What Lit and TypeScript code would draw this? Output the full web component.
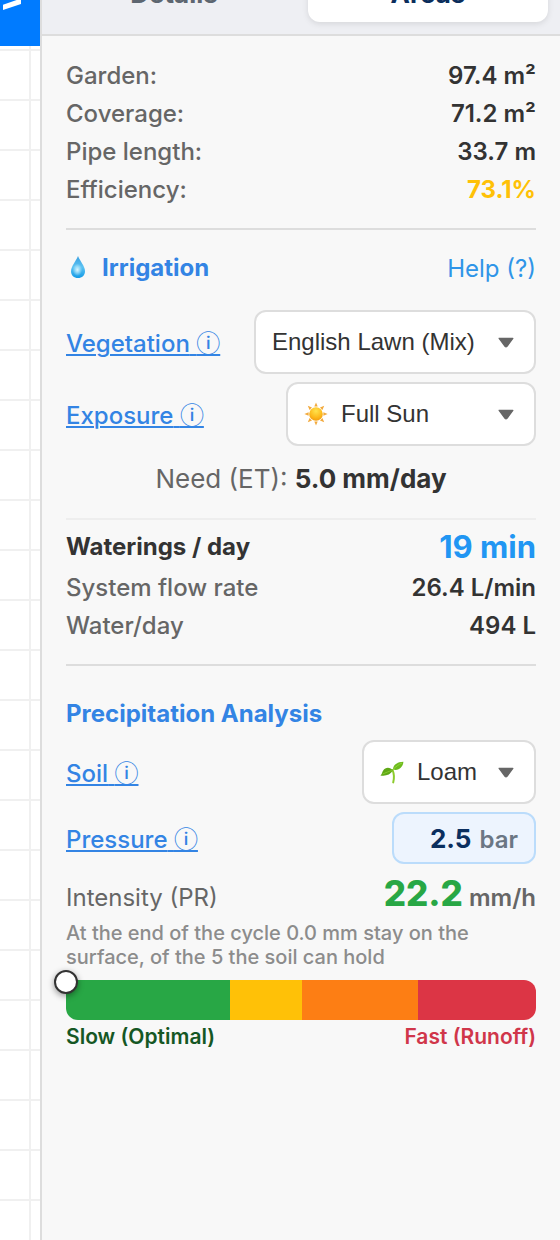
import { LitElement, html, css, svg, nothing, TemplateResult } from "lit";
import { customElement, property } from "lit/decorators.js";

const sun = html`<svg width="24" height="24" viewBox="0 0 24 24" aria-hidden="true">
  <defs>
    <radialGradient id="sun" cx="50%" cy="28%" r="75%">
      <stop offset="0" stop-color="#ffe34d" />
      <stop offset="0.6" stop-color="#fdbb1e" />
      <stop offset="1" stop-color="#f39a0c" />
    </radialGradient>
  </defs>
  ${[0, 45, 90, 135, 180, 225, 270, 315].map(
    (a) => svg`<path d="M12 0.4 L13.7 4.6 H10.3 Z" fill="#f2a93c" transform="rotate(${a} 12 12)" />`
  )}
  <circle cx="12" cy="12" r="6.8" fill="url(#sun)" />
</svg>`;

const seedling = html`<svg width="24" height="24" viewBox="0 0 24 24" aria-hidden="true">
  <path d="M13.2 22.4 C14.4 18 14 13.6 12.6 10" fill="none" stroke="#8ccb2c" stroke-width="2" stroke-linecap="round" />
  <path d="M12.8 10.6 C10.6 7 5.4 7 3.2 10.4 C2 12.2 2 14 0.4 15.4 C4.8 16.6 10.4 15 12.8 10.6 Z" fill="#5fa816" />
  <path d="M2.6 14 C5.6 12.8 8.6 11.4 12.4 10.4" fill="none" stroke="#86c82d" stroke-width="1" />
  <path d="M13 9.4 C13 5 17.4 1.8 23.4 1.8 C23.2 6.8 18.4 11.4 13 9.4 Z" fill="#6dbb1d" />
  <path d="M13.2 9.2 C16 6.6 18.8 4.4 22 3" fill="none" stroke="#93d43b" stroke-width="1" />
</svg>`;

const drop = html`<svg width="24" height="24" viewBox="0 0 24 24" aria-hidden="true">
  <defs>
    <linearGradient id="drop" x1="0" y1="0" x2="0" y2="1">
      <stop offset="0" stop-color="#3a9fe0" />
      <stop offset="0.5" stop-color="#5cc3f3" />
      <stop offset="1" stop-color="#159be6" />
    </linearGradient>
    <radialGradient id="shine" cx="50%" cy="50%" r="50%">
      <stop offset="0" stop-color="#d9f6ff" />
      <stop offset="1" stop-color="#d9f6ff" stop-opacity="0" />
    </radialGradient>
  </defs>
  <path d="M12 0 C14 5 19 10.4 19 15.2 C19 19.4 16 22 12 22 C8 22 5 19.4 5 15.2 C5 10.4 10 5 12 0 Z" fill="url(#drop)" />
  <ellipse cx="11.4" cy="13.8" rx="4.8" ry="6.2" fill="url(#shine)" />
</svg>`;

@customElement("stat-row")
class StatRow extends LitElement {
  @property() label = "";
  @property() value = "";
  @property() tone = "";

  static styles = css`
    :host {
      display: flex;
      justify-content: space-between;
      align-items: center;
      line-height: 38px;
    }
    .label {
      color: #666;
      font-weight: 500;
    }
    .value {
      color: #333;
      font-weight: 600;
    }
    .warn {
      color: #ffc107;
      font-weight: 700;
    }
  `;

  render() {
    return html`<span class="label">${this.label}</span>
      <span class="value ${this.tone}">${this.value}</span>`;
  }
}

@customElement("app-root")
class AppRoot extends LitElement {
  static styles = css`
    :host {
      display: grid;
      grid-template-columns: 40px 1fr;
      min-height: 100vh;
      box-sizing: border-box;
      font-family: Inter, "Liberation Sans", sans-serif;
      font-size: 24px;
      color: #333;
    }
    .canvas {
      background-color: #fff;
      background-image: linear-gradient(#f0f0f0 2px, transparent 2px),
        linear-gradient(90deg, #f0f0f0 2px, transparent 2px);
      background-size: 50px 50px;
      background-position: 29px 49px;
    }
    .toggle {
      display: block;
      width: 100%;
      height: 46px;
      padding: 0;
      border: 0;
      background: #007bff;
    }
    .toggle svg {
      display: block;
      height: 46px;
    }
    .panel {
      border-left: 2px solid #ddd;
      background: #f8f8f8;
    }
    .tabs {
      display: grid;
      grid-template-columns: 1fr 1fr;
      gap: 14px;
      height: 34px;
      overflow: hidden;
      align-content: end;
      padding: 0 12px;
      background: #eeeff3;
      border-bottom: 2px solid #ddd;
    }
    .tab {
      margin: 0 0 12px;
      padding: 12px 0;
      border: 0;
      border-radius: 12px;
      background: transparent;
      font-family: inherit;
      font-size: 26px;
      font-weight: 700;
      line-height: 32px;
      color: #5d6670;
    }
    .tab.active {
      background: #fff;
      color: #0b2e5c;
      box-shadow: 0 2px 6px rgba(0, 0, 0, 0.1);
    }
    .content {
      padding: 21px 24px;
    }
    .block {
      padding-bottom: 19px;
      border-bottom: 2px solid #ddd;
    }
    h2 {
      display: flex;
      align-items: center;
      gap: 12px;
      margin: 0;
      font-size: 24px;
      font-weight: 700;
      line-height: 32px;
      color: #3384e4;
    }
    .head {
      display: flex;
      justify-content: space-between;
      align-items: center;
      padding: 22px 0 26px;
    }
    .help {
      color: #2f95e8;
      text-decoration: none;
    }
    .field {
      display: flex;
      justify-content: space-between;
      align-items: center;
      margin-bottom: 8px;
    }
    .field label {
      padding-top: 4px;
    }
    .field a {
      color: #3384e4;
      font-weight: 500;
      line-height: 32px;
      text-decoration: underline;
      text-decoration-thickness: 2px;
      text-underline-offset: 2px;
    }
    .info {
      font-family: "Noto Sans CJK JP", sans-serif;
      font-weight: 500;
      line-height: 24px;
    }
    .picker {
      display: grid;
      align-items: center;
    }
    .picker > * {
      grid-area: 1 / 1;
    }
    .picker svg {
      pointer-events: none;
      z-index: 1;
    }
    .picker .icon {
      display: flex;
      margin-left: 18px;
      pointer-events: none;
    }
    .picker .arrow {
      justify-self: end;
      margin-right: 22px;
    }
    select {
      appearance: none;
      width: 100%;
      height: 64px;
      padding: 0 56px 2px 16px;
      border: 2px solid #ddd;
      border-radius: 12px;
      background: #fff;
      font-family: "Liberation Sans", Arial, sans-serif;
      font-size: 24px;
      color: #333;
    }
    .with-icon select {
      padding-left: 53px;
    }
    .wide {
      width: 282px;
    }
    .medium {
      width: 250px;
    }
    .narrow {
      width: 174px;
    }
    .need {
      margin: 0;
      padding: 8px 0 22px;
      text-align: center;
      font-size: 26px;
      line-height: 34px;
      color: #666;
      border-bottom: 2px solid #eee;
    }
    .need b {
      color: #333;
      font-weight: 700;
    }
    .main-row {
      display: flex;
      justify-content: space-between;
      align-items: center;
      padding: 7px 0 2px;
      line-height: 40px;
      font-weight: 700;
    }
    .time {
      font-size: 31px;
      color: #2196f3;
    }
    .analysis {
      padding-top: 32px;
    }
    .analysis h2 {
      margin-bottom: 10px;
    }
    .pressure {
      display: flex;
      align-items: baseline;
      gap: 8px;
      box-sizing: border-box;
      width: 144px;
      height: 52px;
      padding: 0 16px;
      border: 2px solid #bbdcfb;
      border-radius: 12px;
      background: #edf4fe;
      color: #6b7684;
      font-weight: 600;
      line-height: 48px;
    }
    .pressure input {
      flex: 1;
      min-width: 0;
      height: 48px;
      padding: 0;
      border: 0;
      background: transparent;
      text-align: right;
      font-family: inherit;
      font-size: 26px;
      font-weight: 700;
      color: #0b2f5f;
    }
    .intensity {
      display: flex;
      justify-content: space-between;
      align-items: baseline;
      line-height: 42px;
      color: #666;
    }
    .rate {
      font-weight: 600;
    }
    .rate strong {
      font-size: 35px;
      font-weight: 800;
      color: #28a745;
    }
    .note {
      margin: 2px 0 11px;
      font-size: 20px;
      font-weight: 500;
      line-height: 24px;
      color: #8c8c8c;
    }
    .meter {
      position: relative;
    }
    .scale {
      display: grid;
      grid-template-columns: 164fr 72fr 116fr 118fr;
      height: 40px;
      border-radius: 12px;
      overflow: hidden;
    }
    .slow {
      background: #28a745;
    }
    .moderate {
      background: #ffc107;
    }
    .quick {
      background: #fd7e14;
    }
    .fast {
      background: #dc3545;
    }
    .knob {
      position: absolute;
      top: -10px;
      width: 24px;
      height: 24px;
      box-sizing: border-box;
      border: 2px solid #333;
      border-radius: 50%;
      background: #fff;
      transform: translateX(-50%);
      box-shadow: 0 2px 6px rgba(0, 0, 0, 0.4);
    }
    .ends {
      display: flex;
      justify-content: space-between;
      padding-top: 5px;
      font-size: 21px;
      font-weight: 600;
      line-height: 24px;
      color: #155724;
    }
    .ends .runoff {
      color: #d0364a;
    }
  `;

  private picker(id: string, label: string, value: string, size: string, icon?: TemplateResult) {
    return html`<div class="field">
      ${this.info(id, label)}
      <div class="picker ${size} ${icon ? "with-icon" : ""}">
        <select id=${id}>
          <option>${value}</option>
        </select>
        ${icon ? html`<span class="icon">${icon}</span>` : nothing}
        <svg class="arrow" width="16" height="12" viewBox="0 0 16 12" aria-hidden="true">
          <path d="M1.2 2.4 H14.8 L8.9 10.4 Q8 11.4 7.1 10.4 Z" fill="#666" stroke="#666" stroke-width="1.4" stroke-linejoin="round" />
        </svg>
      </div>
    </div>`;
  }

  private info(id: string, label: string) {
    return html`<label for=${id}><a href="#${id}">${label} <span class="info">ⓘ</span></a></label>`;
  }

  render() {
    return html`
      <div class="canvas">
        <button class="toggle" aria-label="Toggle panel">
          <svg width="40" height="46" viewBox="0 0 40 46" aria-hidden="true">
            <path d="M3 4.8 L16.6 0 H21 V4 L3 10 Z" fill="#fff" />
          </svg>
        </button>
      </div>
      <aside class="panel">
        <nav class="tabs">
          <button class="tab">Details</button>
          <button class="tab active">Areas</button>
        </nav>
        <div class="content">
          <section class="block">
            <stat-row label="Garden:" value="97.4 m²"></stat-row>
            <stat-row label="Coverage:" value="71.2 m²"></stat-row>
            <stat-row label="Pipe length:" value="33.7 m"></stat-row>
            <stat-row label="Efficiency:" value="73.1%" tone="warn"></stat-row>
          </section>
          <section class="block">
            <div class="head">
              <h2>${drop}Irrigation</h2>
              <a class="help" href="#help">Help (?)</a>
            </div>
            ${this.picker("vegetation", "Vegetation", "English Lawn (Mix)", "wide")}
            ${this.picker("exposure", "Exposure", "Full Sun", "medium", sun)}
            <p class="need">Need (ET): <b>5.0 mm/day</b></p>
            <div class="main-row">
              <span>Waterings / day</span>
              <span class="time">19 min</span>
            </div>
            <stat-row label="System flow rate" value="26.4 L/min"></stat-row>
            <stat-row label="Water/day" value="494 L"></stat-row>
          </section>
          <section class="analysis">
            <h2>Precipitation Analysis</h2>
            ${this.picker("soil", "Soil", "Loam", "narrow", seedling)}
            <div class="field">
              ${this.info("pressure", "Pressure")}
              <div class="pressure">
                <input id="pressure" type="text" inputmode="decimal" value="2.5" />
                <span>bar</span>
              </div>
            </div>
            <div class="intensity">
              <span>Intensity (PR)</span>
              <span class="rate"><strong>22.2</strong> mm/h</span>
            </div>
            <p class="note">At the end of the cycle 0.0 mm stay on the surface, of the 5 the soil can hold</p>
            <div class="meter">
              <div class="scale">
                <span class="slow"></span>
                <span class="moderate"></span>
                <span class="quick"></span>
                <span class="fast"></span>
              </div>
              <span class="knob" style="left: 0%"></span>
            </div>
            <div class="ends">
              <span>Slow (Optimal)</span>
              <span class="runoff">Fast (Runoff)</span>
            </div>
          </section>
        </div>
      </aside>
    `;
  }
}
